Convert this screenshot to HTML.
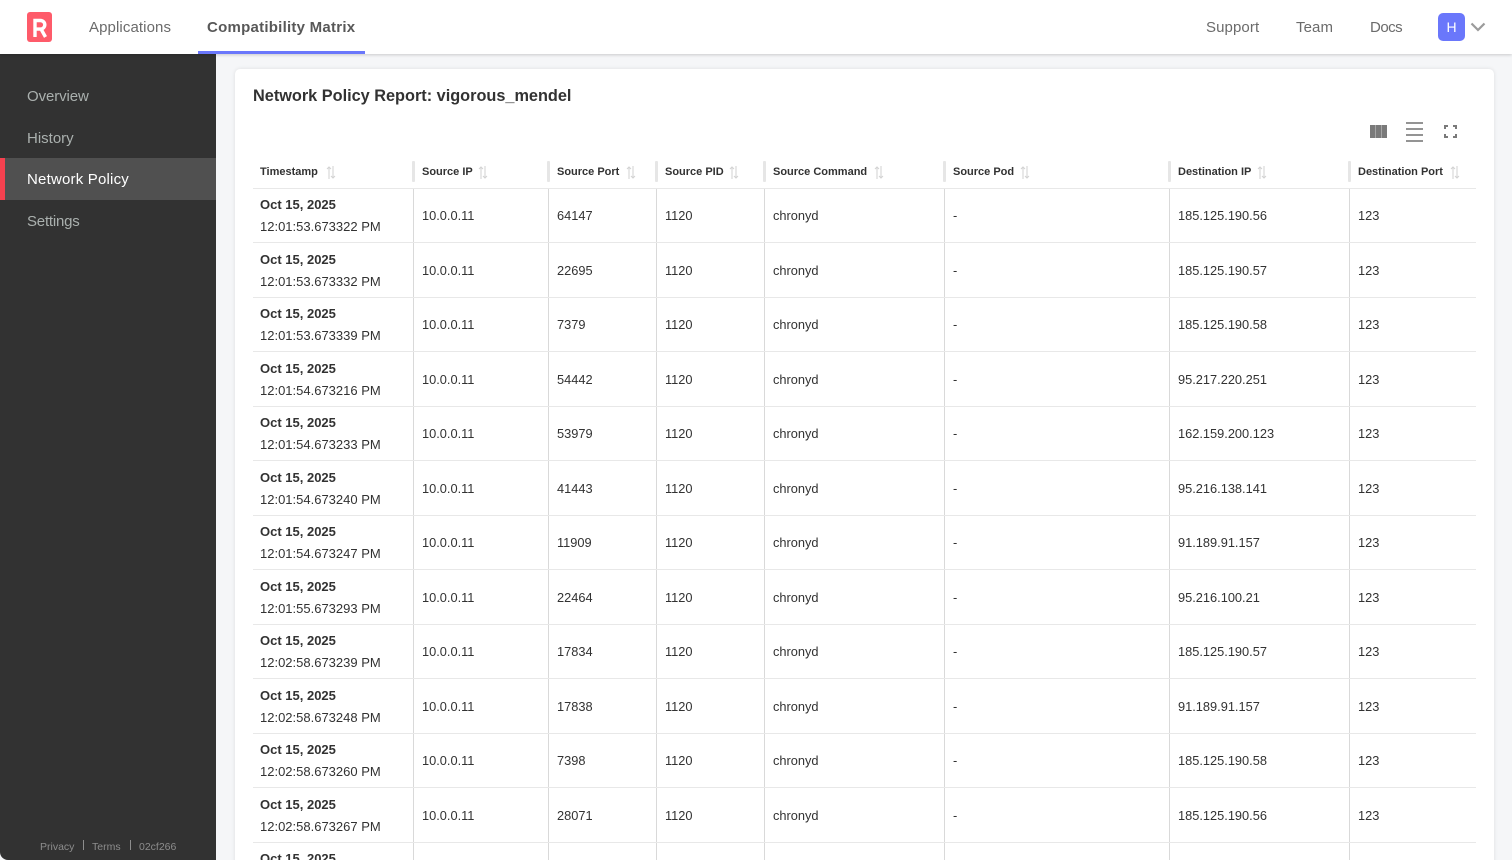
<!DOCTYPE html>
<html><head><meta charset="utf-8"><style>
*{box-sizing:border-box}
html,body{margin:0;padding:0;width:1512px;height:860px;overflow:hidden;background:#f5f6f8;font-family:"Liberation Sans",sans-serif;color:#323232}
#wrap{position:relative;width:1512px;height:860px;overflow:hidden}
.a{position:absolute;white-space:nowrap}
#top{position:absolute;left:0;top:0;width:1512px;height:54px;background:#fff;box-shadow:0 1px 3px rgba(0,0,0,.18);z-index:3}
.nav{position:absolute;top:18px;font-size:15px;line-height:20px;color:#6b6b6b;letter-spacing:.1px;white-space:nowrap}
#side{position:absolute;left:0;top:54px;width:216px;height:806px;background:#323232;border-bottom-left-radius:8px}
.si{position:absolute;left:27px;font-size:15px;line-height:20px;color:#aab0ae;white-space:nowrap}
#card{position:absolute;left:235px;top:69px;width:1259px;height:800px;background:#fff;border-radius:5px;box-shadow:0 0 4px rgba(0,0,0,.1)}
.r{position:absolute;left:253px;width:1223px;height:55px;border-bottom:1px solid #e8e8e8;font-size:12.8px;color:#323232}
.r span{position:absolute;top:50%;margin-top:-7px;line-height:16px;white-space:nowrap}
.r .d{position:absolute;left:7px;top:8px;font-weight:700;font-size:13px;line-height:18px}
.r .t{position:absolute;left:7px;top:30px;font-size:13px;line-height:18px}
.v{position:absolute;top:189px;width:1px;height:671px;background:#d9d9d9}
.hs{position:absolute;top:161px;width:3px;height:21px;background:#e6e6e6;border-radius:1px}
.h{position:absolute;top:165px;font-size:11px;font-weight:700;line-height:15px;color:#323232;white-space:nowrap}
.s{position:absolute;top:166px}
</style></head><body><div id="wrap">
<div id="top">
<svg class="a" style="left:27px;top:12px" width="26" height="30" viewBox="0 0 26 30"><rect x="0" y="0" width="25" height="30" rx="3" fill="#fe5b6a"/><path d="M8 25V8.500h5.500a4.300 4.300 0 0 1 0 8.600H8M14 17l4.500 8" fill="none" stroke="#fff" stroke-width="3.400"/></svg>
<div class="nav" style="left:89px">Applications</div>
<div class="nav" style="left:207px;font-weight:700;color:#585858;letter-spacing:.25px">Compatibility Matrix</div>
<div class="a" style="left:198px;top:51px;width:167px;height:3px;background:#6a77fb"></div>
<div class="nav" style="left:1206px">Support</div>
<div class="nav" style="left:1296px">Team</div>
<div class="nav" style="left:1370px;letter-spacing:-.5px">Docs</div>
<div class="a" style="left:1438px;top:13px;width:27px;height:28px;border-radius:5px;background:#6a77fb;color:#fff;font-size:14px;line-height:28px;text-align:center">H</div>
<svg class="a" style="left:1470px;top:22px" width="16" height="10" viewBox="0 0 16 10"><path d="M1.500 1.500L8 8l6.500-6.500" fill="none" stroke="#9b9b9b" stroke-width="2.200"/></svg>
</div>
<div id="side">
<div class="si" style="letter-spacing:-.1px;top:33px">Overview</div>
<div class="si" style="top:75px">History</div>
<div class="a" style="left:0;top:104px;width:216px;height:42px;background:#505050;border-left:5px solid #f5414f"></div>
<div class="si" style="top:116px;color:#fff;letter-spacing:.2px">Network Policy</div>
<div class="si" style="top:158px;letter-spacing:-.2px">Settings</div>
<div class="a" style="left:40px;top:786px;font-size:10.500px;line-height:14px;color:#8d8d8d">Privacy</div>
<div class="a" style="left:83px;top:786px;width:1px;height:10px;background:#8d8d8d"></div>
<div class="a" style="left:92px;top:786px;font-size:10.500px;line-height:14px;color:#8d8d8d">Terms</div>
<div class="a" style="left:130px;top:786px;width:1px;height:10px;background:#8d8d8d"></div>
<div class="a" style="left:139px;top:786px;font-size:10.500px;line-height:14px;color:#8d8d8d">02cf266</div>
</div>
<div id="card"></div>
<div class="a" style="left:253px;top:86px;font-size:16.300px;font-weight:700;line-height:21px;color:#323232">Network Policy Report: vigorous_mendel</div>
<svg class="a" style="left:1370px;top:125px" width="17" height="13"><rect width="17" height="13" fill="#a5a5a5"/><path d="M0 0h5v13H0zM6 0h5v13H6zM12 0h5v13h-5z" fill="#7a7a7a"/></svg>
<svg class="a" style="left:1406px;top:122px" width="17" height="20"><path d="M0 1h17M0 7h17M0 13h17M0 19h17" stroke="#858585" stroke-width="1.800"/></svg>
<svg class="a" style="left:1444px;top:125px" width="13" height="13" fill="none" stroke="#7a7a7a" stroke-width="2"><path d="M1 4V1h3M9 1h3v3M12 9v3H9M4 12H1V9"/></svg>
<div class="a" style="left:253px;top:188px;width:1223px;height:1px;background:#e8e8e8"></div>
<div class="hs" style="left:412px"></div><div class="hs" style="left:547px"></div><div class="hs" style="left:655px"></div><div class="hs" style="left:763px"></div><div class="hs" style="left:943px"></div><div class="hs" style="left:1168px"></div><div class="hs" style="left:1348px"></div>
<div class="v" style="left:413px"></div><div class="v" style="left:548px"></div><div class="v" style="left:656px"></div><div class="v" style="left:764px"></div><div class="v" style="left:944px"></div><div class="v" style="left:1169px"></div><div class="v" style="left:1349px"></div>
<div class="h" style="left:260px">Timestamp</div><div class="h" style="left:422px">Source IP</div><div class="h" style="left:557px">Source Port</div><div class="h" style="left:665px">Source PID</div><div class="h" style="left:773px">Source Command</div><div class="h" style="left:953px">Source Pod</div><div class="h" style="left:1178px">Destination IP</div><div class="h" style="left:1358px">Destination Port</div>
<svg class="s" style="left:326px" width="10" height="13"><path d="M3 13V1M1 3l2-2 2 2M7 0v12M5 10l2 2 2-2" fill="none" stroke="#d2d2d2"/></svg>
<svg class="s" style="left:478px" width="10" height="13"><path d="M3 13V1M1 3l2-2 2 2M7 0v12M5 10l2 2 2-2" fill="none" stroke="#d2d2d2"/></svg>
<svg class="s" style="left:626px" width="10" height="13"><path d="M3 13V1M1 3l2-2 2 2M7 0v12M5 10l2 2 2-2" fill="none" stroke="#d2d2d2"/></svg>
<svg class="s" style="left:729px" width="10" height="13"><path d="M3 13V1M1 3l2-2 2 2M7 0v12M5 10l2 2 2-2" fill="none" stroke="#d2d2d2"/></svg>
<svg class="s" style="left:874px" width="10" height="13"><path d="M3 13V1M1 3l2-2 2 2M7 0v12M5 10l2 2 2-2" fill="none" stroke="#d2d2d2"/></svg>
<svg class="s" style="left:1020px" width="10" height="13"><path d="M3 13V1M1 3l2-2 2 2M7 0v12M5 10l2 2 2-2" fill="none" stroke="#d2d2d2"/></svg>
<svg class="s" style="left:1257px" width="10" height="13"><path d="M3 13V1M1 3l2-2 2 2M7 0v12M5 10l2 2 2-2" fill="none" stroke="#d2d2d2"/></svg>
<svg class="s" style="left:1450px" width="10" height="13"><path d="M3 13V1M1 3l2-2 2 2M7 0v12M5 10l2 2 2-2" fill="none" stroke="#d2d2d2"/></svg>

<div class="r" style="top:188px"><div class="d">Oct 15, 2025</div><div class="t">12:01:53.673322 PM</div><span style="left:169px">10.0.0.11</span><span style="left:304px">64147</span><span style="left:412px">1120</span><span style="left:520px">chronyd</span><span style="left:700px">-</span><span style="left:925px">185.125.190.56</span><span style="left:1105px">123</span></div>
<div class="r" style="top:243px"><div class="d">Oct 15, 2025</div><div class="t">12:01:53.673332 PM</div><span style="left:169px">10.0.0.11</span><span style="left:304px">22695</span><span style="left:412px">1120</span><span style="left:520px">chronyd</span><span style="left:700px">-</span><span style="left:925px">185.125.190.57</span><span style="left:1105px">123</span></div>
<div class="r" style="top:297px"><div class="d">Oct 15, 2025</div><div class="t">12:01:53.673339 PM</div><span style="left:169px">10.0.0.11</span><span style="left:304px">7379</span><span style="left:412px">1120</span><span style="left:520px">chronyd</span><span style="left:700px">-</span><span style="left:925px">185.125.190.58</span><span style="left:1105px">123</span></div>
<div class="r" style="top:352px"><div class="d">Oct 15, 2025</div><div class="t">12:01:54.673216 PM</div><span style="left:169px">10.0.0.11</span><span style="left:304px">54442</span><span style="left:412px">1120</span><span style="left:520px">chronyd</span><span style="left:700px">-</span><span style="left:925px">95.217.220.251</span><span style="left:1105px">123</span></div>
<div class="r" style="top:406px"><div class="d">Oct 15, 2025</div><div class="t">12:01:54.673233 PM</div><span style="left:169px">10.0.0.11</span><span style="left:304px">53979</span><span style="left:412px">1120</span><span style="left:520px">chronyd</span><span style="left:700px">-</span><span style="left:925px">162.159.200.123</span><span style="left:1105px">123</span></div>
<div class="r" style="top:461px"><div class="d">Oct 15, 2025</div><div class="t">12:01:54.673240 PM</div><span style="left:169px">10.0.0.11</span><span style="left:304px">41443</span><span style="left:412px">1120</span><span style="left:520px">chronyd</span><span style="left:700px">-</span><span style="left:925px">95.216.138.141</span><span style="left:1105px">123</span></div>
<div class="r" style="top:515px"><div class="d">Oct 15, 2025</div><div class="t">12:01:54.673247 PM</div><span style="left:169px">10.0.0.11</span><span style="left:304px">11909</span><span style="left:412px">1120</span><span style="left:520px">chronyd</span><span style="left:700px">-</span><span style="left:925px">91.189.91.157</span><span style="left:1105px">123</span></div>
<div class="r" style="top:570px"><div class="d">Oct 15, 2025</div><div class="t">12:01:55.673293 PM</div><span style="left:169px">10.0.0.11</span><span style="left:304px">22464</span><span style="left:412px">1120</span><span style="left:520px">chronyd</span><span style="left:700px">-</span><span style="left:925px">95.216.100.21</span><span style="left:1105px">123</span></div>
<div class="r" style="top:624px"><div class="d">Oct 15, 2025</div><div class="t">12:02:58.673239 PM</div><span style="left:169px">10.0.0.11</span><span style="left:304px">17834</span><span style="left:412px">1120</span><span style="left:520px">chronyd</span><span style="left:700px">-</span><span style="left:925px">185.125.190.57</span><span style="left:1105px">123</span></div>
<div class="r" style="top:679px"><div class="d">Oct 15, 2025</div><div class="t">12:02:58.673248 PM</div><span style="left:169px">10.0.0.11</span><span style="left:304px">17838</span><span style="left:412px">1120</span><span style="left:520px">chronyd</span><span style="left:700px">-</span><span style="left:925px">91.189.91.157</span><span style="left:1105px">123</span></div>
<div class="r" style="top:733px"><div class="d">Oct 15, 2025</div><div class="t">12:02:58.673260 PM</div><span style="left:169px">10.0.0.11</span><span style="left:304px">7398</span><span style="left:412px">1120</span><span style="left:520px">chronyd</span><span style="left:700px">-</span><span style="left:925px">185.125.190.58</span><span style="left:1105px">123</span></div>
<div class="r" style="top:788px"><div class="d">Oct 15, 2025</div><div class="t">12:02:58.673267 PM</div><span style="left:169px">10.0.0.11</span><span style="left:304px">28071</span><span style="left:412px">1120</span><span style="left:520px">chronyd</span><span style="left:700px">-</span><span style="left:925px">185.125.190.56</span><span style="left:1105px">123</span></div>
<div class="r" style="top:842px;border:0"><div class="d">Oct 15, 2025</div></div>
</div></body></html>
